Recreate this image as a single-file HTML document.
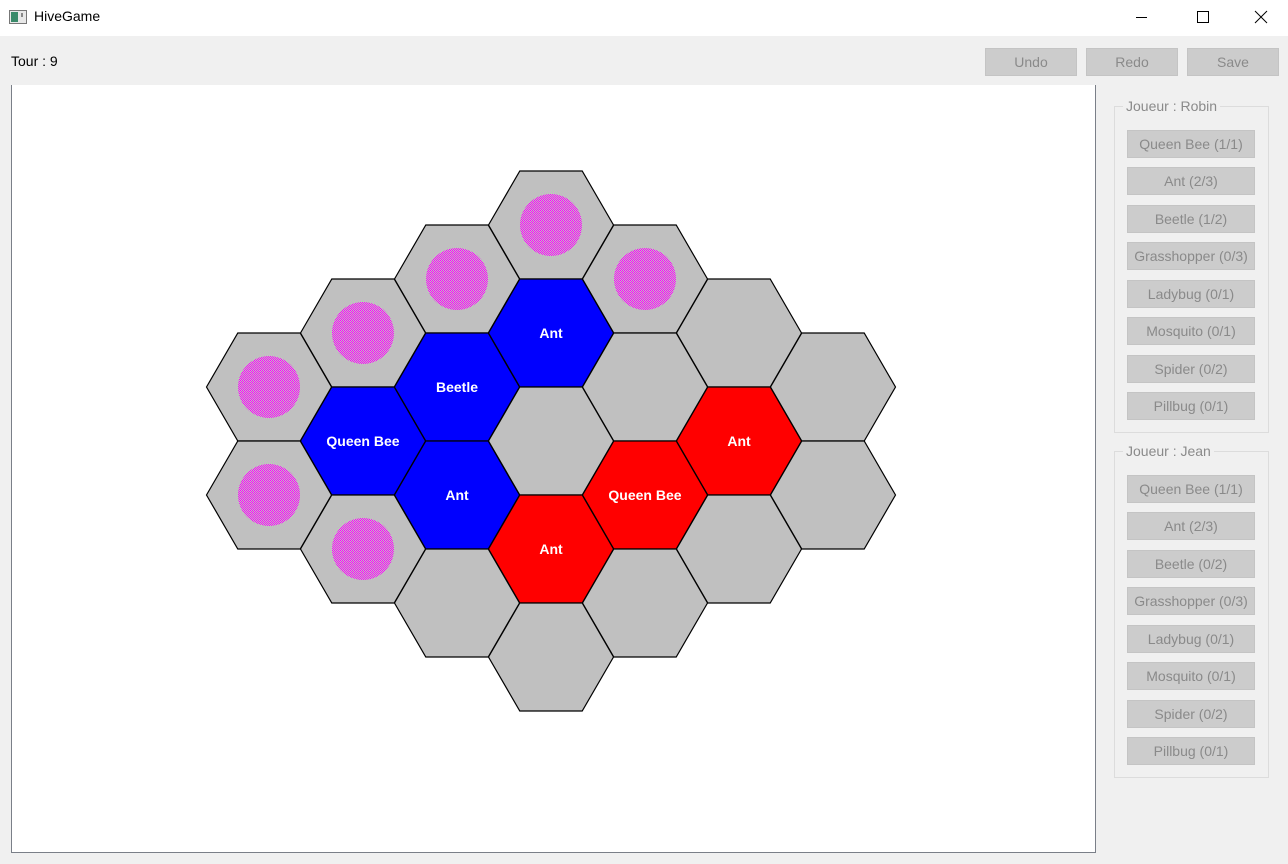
<!DOCTYPE html>
<html><head><meta charset="utf-8"><style>
body{margin:0;width:1288px;height:864px;background:#f0f0f0;font-family:"Segoe UI","Liberation Sans",sans-serif;position:relative;overflow:hidden}
.title{position:absolute;left:0;top:0;width:1288px;height:36px;background:#fff}
.title span{position:absolute;left:34px;top:8px;font-size:14px;color:#000}
.btn{position:absolute;background:#cccccc;border:1px solid #c4c4c4;color:#8a8a8a;font-size:14px;text-align:center;box-sizing:border-box}
.top{top:48px;width:92px;height:28px;line-height:26px}
.grp{position:absolute;left:1114px;width:155px;border:1px solid #dcdcdc;box-sizing:border-box}
.grp .lbl{position:absolute;left:8px;top:-10px;background:#f0f0f0;padding:0 3px;color:#8a8a8a;font-size:14px;line-height:18px}
.gb{left:1127px;width:128px;height:28px;line-height:26px}
</style></head><body>
<div class="title">
<svg style="position:absolute;left:9px;top:10px" width="18" height="15"><rect x="0.5" y="0.5" width="17" height="13" fill="#e8e8e8" stroke="#777"/><rect x="2" y="2" width="7" height="10" fill="#3a8a6a"/><rect x="12" y="3" width="2" height="4" fill="#888"/></svg>
<span>HiveGame</span>
<svg style="position:absolute;left:1130px;top:8px" width="145" height="20"><line x1="6" y1="9.5" x2="17" y2="9.5" stroke="#000"/><rect x="67.5" y="3.5" width="11" height="11" fill="none" stroke="#000"/><path d="M125 3 L137 15 M137 3 L125 15" stroke="#000"/></svg>
</div>
<div style="position:absolute;left:11px;top:53px;font-size:14px">Tour : 9</div>
<div class="btn top" style="left:985px">Undo</div>
<div class="btn top" style="left:1086px">Redo</div>
<div class="btn top" style="left:1187px">Save</div>
<div style="position:absolute;left:11px;top:85px;width:1083px;height:767px;background:#fff;border:1px solid #7a7f88;border-top:none"></div>
<svg style="position:absolute;left:0;top:0" width="1288" height="864">
<defs><pattern id="ck" width="2" height="2" patternUnits="userSpaceOnUse"><rect width="2" height="2" fill="#c0c0c0"/><rect width="1" height="1" fill="#ff00ff"/><rect x="1" y="1" width="1" height="1" fill="#ff00ff"/></pattern></defs>
<g id="hexes" stroke="#000" stroke-width="1.2" font-family="Liberation Sans,sans-serif" font-weight="bold" font-size="14" text-anchor="middle"></g>
</svg>
<script>
var H=[[551,225,'g','c'],[457,279,'g','c'],[645,279,'g','c'],[363,333,'g','c'],[551,333,'b','Ant'],[739,333,'g'],[269,387,'g','c'],[457,387,'b','Beetle'],[645,387,'g'],[833,387,'g'],[363,441,'b','Queen Bee'],[551,441,'g'],[739,441,'r','Ant'],[269,495,'g','c'],[457,495,'b','Ant'],[645,495,'r','Queen Bee'],[833,495,'g'],[363,549,'g','c'],[551,549,'r','Ant'],[739,549,'g'],[457,603,'g'],[645,603,'g'],[551,657,'g']];
var C={g:'#c0c0c0',b:'#0000ff',r:'#ff0000'};var s='';
H.forEach(function(h){var x=h[0],y=h[1],r=62.5,a=31.2,hh=54;
s+='<polygon points="'+(x-r)+','+y+' '+(x-a)+','+(y-hh)+' '+(x+a)+','+(y-hh)+' '+(x+r)+','+y+' '+(x+a)+','+(y+hh)+' '+(x-a)+','+(y+hh)+'" fill="'+C[h[2]]+'"/>';
if(h[3]=='c')s+='<circle cx="'+x+'" cy="'+y+'" r="31" fill="url(#ck)" stroke="none"/>';
else if(h[3])s+='<text x="'+x+'" y="'+(y+5)+'" fill="#fff" stroke="none">'+h[3]+'</text>';});
document.getElementById('hexes').innerHTML=s;
</script>
<div class="grp" style="top:106px;height:327px"><div class="lbl">Joueur : Robin</div></div>
<div class="grp" style="top:451px;height:327px"><div class="lbl">Joueur : Jean</div></div>
<div class="btn gb" style="top:130px">Queen Bee (1/1)</div>
<div class="btn gb" style="top:167px">Ant (2/3)</div>
<div class="btn gb" style="top:205px">Beetle (1/2)</div>
<div class="btn gb" style="top:242px">Grasshopper (0/3)</div>
<div class="btn gb" style="top:280px">Ladybug (0/1)</div>
<div class="btn gb" style="top:317px">Mosquito (0/1)</div>
<div class="btn gb" style="top:355px">Spider (0/2)</div>
<div class="btn gb" style="top:392px">Pillbug (0/1)</div>
<div class="btn gb" style="top:475px">Queen Bee (1/1)</div>
<div class="btn gb" style="top:512px">Ant (2/3)</div>
<div class="btn gb" style="top:550px">Beetle (0/2)</div>
<div class="btn gb" style="top:587px">Grasshopper (0/3)</div>
<div class="btn gb" style="top:625px">Ladybug (0/1)</div>
<div class="btn gb" style="top:662px">Mosquito (0/1)</div>
<div class="btn gb" style="top:700px">Spider (0/2)</div>
<div class="btn gb" style="top:737px">Pillbug (0/1)</div>
</body></html>
